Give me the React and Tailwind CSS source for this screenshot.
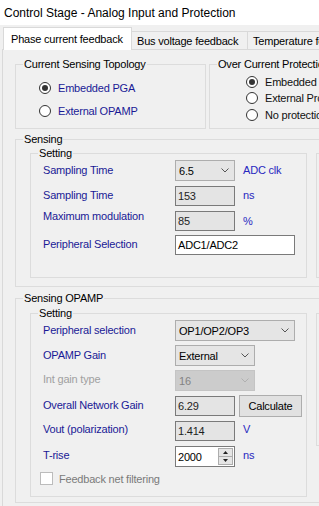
import React from "react";

const NAVY = "text-[#1a1a96]";
const UNIT = "text-[#2828c0]";

function GroupBox({ title, className = "", children }) {
  return (
    <div className={`border border-[#dcdcdc] ${className}`}>
      <div className="-mt-[8px] ml-[7px] w-fit whitespace-nowrap bg-[#f0f0f0] px-[1px] leading-[14px] text-black">
        {title}
      </div>
      {children}
    </div>
  );
}

function Radio({ checked, label, labelClass }) {
  return (
    <div className="flex h-[14px] items-center">
      <div className="flex h-[12px] w-[12px] items-center justify-center rounded-full border border-[#333] bg-white">
        {checked && <div className="h-[6px] w-[6px] rounded-full bg-[#333]" />}
      </div>
      <span className={`ml-[7px] whitespace-nowrap leading-[14px] ${labelClass}`}>{label}</span>
    </div>
  );
}

function Chevron({ color }) {
  return (
    <svg width="8" height="5" viewBox="0 0 8 5" className="shrink-0">
      <path d="M0.5 0.5 L4 4 L7.5 0.5" stroke={color} strokeWidth="1" fill="none" />
    </svg>
  );
}

function Combo({ w, value, disabled }) {
  return (
    <div
      className={`flex h-[21px] ${w} items-center justify-between border pl-[3px] pr-[5px] leading-[14px] ${
        disabled ? "border-[#c4c4c4] bg-[#cccccc] text-[#838383]" : "border-[#adadad] bg-[#e5e5e5] text-black"
      }`}
    >
      <span>{value}</span>
      <Chevron color={disabled ? "#b0b0b0" : "#555"} />
    </div>
  );
}

function ReadBox({ w, value, className = "" }) {
  return (
    <div className={`flex h-[20px] ${w} items-center border border-[#7a7a7a] bg-[#e4e4e4] pl-[2px] leading-[14px] text-[#1e1e1e] ${className}`}>
      {value}
    </div>
  );
}

function Label({ children, className = "" }) {
  return <div className={`w-[144px] shrink-0 whitespace-nowrap pl-[12px] leading-[14px] ${className}`}>{children}</div>;
}

function Unit({ children, className = "" }) {
  return <div className={`ml-[8px] whitespace-nowrap leading-[14px] ${UNIT} ${className}`}>{children}</div>;
}

export default function App() {
  return (
    <div className="h-[506px] w-[319px] overflow-hidden bg-[#f0f0f0] font-['Liberation_Sans',Arial,sans-serif] text-[11px] tracking-[-0.2px] text-black">
      {/* title */}
      <div className="flex h-[25px] items-center bg-white pl-[4px] text-[12px] tracking-normal">
        Control Stage - Analog Input and Protection
      </div>
      {/* tabs */}
      <div className="flex h-[24px] items-end pl-[3px]">
        <div className="relative z-10 -mb-[1px] flex h-[23px] w-[129px] shrink-0 items-center border-x border-t border-[#d9d9d9] bg-white pl-[7px] leading-[14px]">
          Phase current feedback
        </div>
        <div className="flex h-[18px] w-[116px] shrink-0 items-center border-r border-t border-[#d9d9d9] pl-[5px] leading-[14px]">
          Bus voltage feedback
        </div>
        <div className="flex h-[18px] w-[140px] shrink-0 items-center border-r border-t border-[#d9d9d9] pl-[5px] leading-[14px] whitespace-nowrap">
          Temperature feedback
        </div>
      </div>
      {/* page */}
      <div className="ml-[2px] h-[457px] border-l border-t border-[#d9d9d9] pl-[12px]">
        <div className="mt-[14px] flex gap-[3px]">
          <GroupBox title="Current Sensing Topology" className="h-[65px] w-[191px] shrink-0">
            <div className="mt-[10px] pl-[23px]">
              <Radio checked label="Embedded PGA" labelClass={NAVY} />
              <div className="mt-[9px]">
                <Radio label="External OPAMP" labelClass={NAVY} />
              </div>
            </div>
          </GroupBox>
          <GroupBox title="Over Current Protection" className="h-[65px] w-[200px] shrink-0">
            <div className="mt-[4px] pl-[36px]">
              <Radio checked label="Embedded" labelClass="text-[#111]" />
              <div className="mt-[2px]">
                <Radio label="External Protection" labelClass="text-[#111]" />
              </div>
              <div className="mt-[3px]">
                <Radio label="No protection" labelClass="text-[#111]" />
              </div>
            </div>
          </GroupBox>
        </div>

        {/* Sensing */}
        <GroupBox title="Sensing" className="mt-[10px] h-[148px] w-[420px]">
          <div className="ml-[14px] mt-[7px] flex">
            <GroupBox title="Setting" className="h-[125px] w-[277px] shrink-0">
              <div className="flex h-[21px] items-start">
                <Label className={`mt-[3px] ${NAVY}`}>Sampling Time</Label>
                <Combo w="w-[60px]" value="6.5" />
                <Unit className="mt-[3px] ml-[8px]">ADC clk</Unit>
              </div>
              <div className="mt-[5px] flex h-[20px] items-start">
                <Label className={`mt-[2px] ${NAVY}`}>Sampling Time</Label>
                <ReadBox w="w-[60px]" value="153" />
                <Unit className="mt-[2px]">ns</Unit>
              </div>
              <div className="mt-[5px] flex h-[20px] items-start">
                <Label className={`-mt-[2px] ${NAVY}`}>Maximum modulation</Label>
                <ReadBox w="w-[60px]" value="85" />
                <Unit className="mt-[3px]">%</Unit>
              </div>
              <div className="mt-[4px] flex h-[20px] items-start">
                <Label className={`mt-[2px] ${NAVY}`}>Peripheral Selection</Label>
                <div className="flex h-[20px] w-[120px] items-center border border-[#7a7a7a] bg-white pl-[2px] leading-[14px] text-black">
                  ADC1/ADC2
                </div>
              </div>
            </GroupBox>
            <div className="ml-[9px] h-[125px] w-[100px] shrink-0 border border-[#dcdcdc]" />
          </div>
        </GroupBox>

        {/* Sensing OPAMP */}
        <GroupBox title="Sensing OPAMP" className="mt-[11px] h-[205px] w-[420px]">
          <div className="ml-[14px] mt-[8px] flex items-start">
            <GroupBox title="Setting" className="h-[184px] w-[277px] shrink-0">
              <div className="flex h-[21px] items-start">
                <Label className={`mt-[3px] ${NAVY}`}>Peripheral selection</Label>
                <Combo w="w-[120px]" value="OP1/OP2/OP3" />
              </div>
              <div className="mt-[4px] flex h-[21px] items-start">
                <Label className={`mt-[3px] ${NAVY}`}>OPAMP Gain</Label>
                <Combo w="w-[80px]" value="External" />
              </div>
              <div className="mt-[4px] flex h-[21px] items-start">
                <Label className="mt-[2px] text-[#a0a0a0]">Int gain type</Label>
                <Combo w="w-[80px]" value="16" disabled />
              </div>
              <div className="mt-[4px] flex h-[22px] items-start">
                <Label className={`mt-[3px] ${NAVY}`}>Overall Network Gain</Label>
                <ReadBox w="w-[60px]" value="6.29" className="mt-[1px]" />
                <div className="ml-[4px] flex h-[22px] w-[63px] items-center justify-center border border-[#adadad] bg-[#e1e1e1] leading-[14px] text-black">
                  Calculate
                </div>
              </div>
              <div className="mt-[4px] flex h-[20px] items-start">
                <Label className={`mt-[1px] ${NAVY}`}>Vout (polarization)</Label>
                <ReadBox w="w-[60px]" value="1.414" />
                <Unit className="mt-[1px]">V</Unit>
              </div>
              <div className="mt-[5px] flex h-[21px] items-start">
                <Label className={`mt-[2px] ${NAVY}`}>T-rise</Label>
                <div className="flex h-[21px] w-[60px] items-center justify-between border border-[#7a7a7a] bg-white pl-[2px] pr-[1px] leading-[14px] text-black">
                  <span>2000</span>
                  <div className="flex h-[17px] w-[15px] flex-col">
                    <div className="flex h-[8.5px] items-center justify-center border border-[#adadad] bg-[#e5e5e5]">
                      <svg width="5" height="3" viewBox="0 0 5 3"><path d="M2.5 0 L5 3 L0 3 Z" fill="#222" /></svg>
                    </div>
                    <div className="flex h-[8.5px] items-center justify-center border border-t-0 border-[#adadad] bg-[#e5e5e5]">
                      <svg width="5" height="3" viewBox="0 0 5 3"><path d="M0 0 L5 0 L2.5 3 Z" fill="#222" /></svg>
                    </div>
                  </div>
                </div>
                <Unit className="mt-[2px]">ns</Unit>
              </div>
              <div className="mt-[5px] flex h-[13px] items-center">
                <div className="ml-[9px] h-[13px] w-[13px] border border-[#bcbcbc] bg-white" />
                <span className="ml-[6px] whitespace-nowrap leading-[14px] text-[#7a7a7a]">Feedback net filtering</span>
              </div>
            </GroupBox>
            <div className="ml-[9px] h-[133px] w-[100px] shrink-0 border border-[#dcdcdc]" />
          </div>
        </GroupBox>
      </div>
    </div>
  );
}
